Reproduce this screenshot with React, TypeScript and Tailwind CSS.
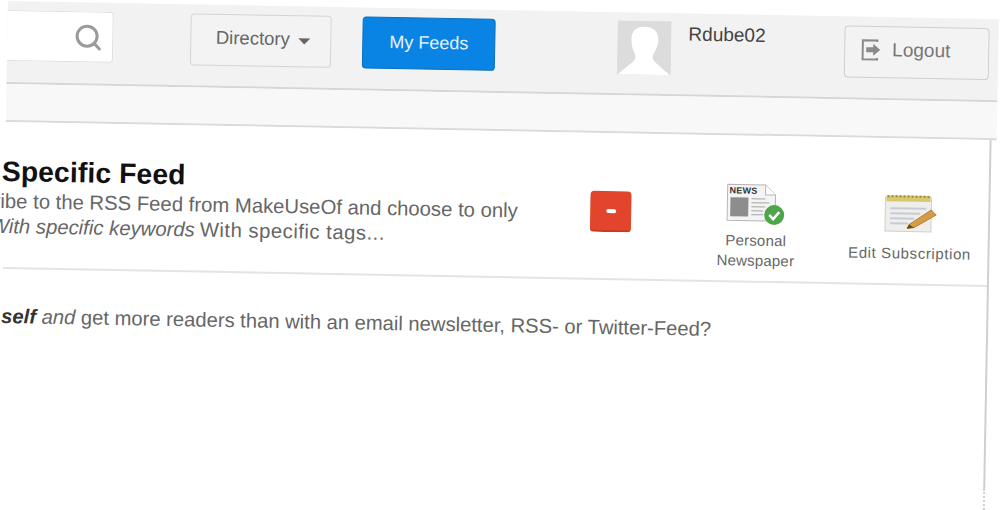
import { Search } from "lucide-react";

function LogoutIcon() {
  return (
    <svg width="22" height="24" viewBox="0 0 22 24" fill="none">
      <path d="M17 4V2.5H2.5v19H17V20" stroke="#8a8a8a" strokeWidth="2" />
      <path d="M6 9.5h7V6l7 6-7 6v-3.5H6z" fill="#8a8a8a" />
    </svg>
  );
}

function Avatar() {
  return (
    <svg width="54" height="54" viewBox="0 0 54 54" className="shrink-0">
      <rect width="54" height="54" fill="#dcdcdc" />
      <path
        d="M27 6c-8 0-13 4-13 13 0 6 2 11 4 15 1 3 0 6-3 8L1 54h52L39 42c-3-2-4-5-3-8 2-4 5-9 5-15 0-9-6-13-14-13z"
        fill="#fff"
      />
    </svg>
  );
}

function NewspaperIcon() {
  return (
    <svg width="60" height="44" viewBox="0 0 60 44">
      <path d="M1 2h38l10 10v26H1z" fill="#f4f4f4" stroke="#b5b5b5" />
      <path d="M39 2v10h10" fill="#fff" stroke="#b5b5b5" />
      <text x="3" y="11" fontSize="9" fontWeight="700" fill="#333" fontFamily="Liberation Sans, sans-serif">
        NEWS
      </text>
      <rect x="4" y="15" width="18" height="19" fill="#8d8d8d" />
      <path d="M25 16h14M25 20h18M25 24h14M25 28h12M25 32h12" stroke="#a5a5a5" />
      <circle cx="48" cy="32" r="10" fill="#4da64a" />
      <path d="M43 32l4 4 6-7" fill="none" stroke="#fff" strokeWidth="2.5" />
    </svg>
  );
}

function NotepadIcon() {
  return (
    <svg width="54" height="40" viewBox="0 0 54 40">
      <rect x="2" y="4" width="46" height="34" fill="#eeeeea" stroke="#cfcfcf" />
      <rect x="3" y="2" width="44" height="6" fill="#d8c872" />
      <path d="M4 3h42" stroke="#9c8b3c" strokeWidth="2" strokeDasharray="2 2" />
      <path d="M7 15h36M7 20h30M7 25h24M7 30h18" stroke="#c6cbd6" strokeWidth="2" />
      <path d="M26 31l22-15 5 5-22 13-7 1z" fill="#d69c45" stroke="#a87428" strokeWidth="0.8" />
      <path d="M24 35l2-4 5 3z" fill="#5b4a32" />
    </svg>
  );
}

export default function App() {
  return (
    <div className="h-[510px] w-[1000px] overflow-hidden bg-white font-['Liberation_Sans',Arial,sans-serif]">
      <div className="ml-[8px] w-[991px] origin-top-left rotate-[1.05deg] pt-[1px]">
        {/* top bar */}
        <div className="flex h-[83px] items-center border-b-2 border-[#d6d6d6] bg-[#f2f2f2] pb-[16px] pt-[4px]">
          <div className="flex h-[51px] w-[106px] items-center justify-end rounded-r border border-l-0 border-[#dedede] bg-white pr-[9px]">
            <Search size={30} strokeWidth={2.4} className="text-[#9a9a9a]" />
          </div>
          <button className="ml-[77px] flex h-[52px] w-[141px] items-center justify-center gap-[8px] rounded-sm border border-[#d4d4d4] bg-[#f3f3f3] pb-[3px] pl-[4px] text-[18.5px] text-[#666]">
            Directory
            <span className="mt-[4px] h-0 w-0 border-x-[6px] border-t-[6px] border-x-transparent border-t-[#666]" />
          </button>
          <button className="ml-[31px] h-[52px] w-[133px] rounded-sm border border-[#0b6fbd] bg-[#0a84e4] text-[18px] text-[#e4f3ff]">
            My Feeds
          </button>
          <div className="ml-[122px] flex items-start">
            <Avatar />
            <span className="ml-[17px] mt-[2px] text-[19px] leading-[22px] text-[#444]">Rdube02</span>
          </div>
          <button className="ml-auto mr-[9px] flex h-[52px] w-[145px] items-center gap-[10px] rounded-sm border border-[#cfcfcf] bg-[#f3f3f3] pb-[3px] pl-[15px] text-[19px] text-[#777]">
            <LogoutIcon />
            Logout
          </button>
        </div>

        {/* strip under the bar */}
        <div className="h-[38px] border-b-2 border-[#dadada] bg-[#f8f8f8]" />

        {/* feed card */}
        <div className="relative h-[349px] w-[986px] border-r-2 border-[#cfcfcf] bg-white">
          <div className="flex h-[147px] items-start border-b-2 border-[#e4e4e4]">
            <div className="w-[586px]">
              <h2 className="-ml-[3px] mt-[33px] text-[28.3px] font-bold leading-[32px] tracking-[0.1px] text-[#111]">
                Specific Feed
              </h2>
              <div className="mt-[2px] whitespace-nowrap text-[20.3px] leading-[25px] text-[#666]">
                <p className="-ml-[67px]">Subscribe to the RSS Feed from MakeUseOf and choose to only</p>
                <p className="-ml-[14px]">
                  <em>With specific keywords</em>
                  <span className="ml-[5px] tracking-[0.5px]">With specific tags...</span>
                </p>
              </div>
            </div>
            <button className="mt-[58px] flex h-[41px] w-[41px] items-center justify-center rounded-sm border-b-2 border-[#c93a22] bg-[#e2452b]">
              <span className="h-[4px] w-[10px] rounded-sm bg-white" />
            </button>
            <div className="ml-[75px] mt-[47px] flex w-[100px] flex-col items-center text-center text-[15px] leading-[20px] tracking-[0.2px] text-[#666]">
              <NewspaperIcon />
              <span className="mt-[4px]">Personal</span>
              <span>Newspaper</span>
            </div>
            <div className="ml-[39px] mt-[55px] flex w-[130px] flex-col items-center text-[15px] leading-[20px] tracking-[0.6px] text-[#666]">
              <NotepadIcon />
              <span className="mt-[10px] whitespace-nowrap">Edit Subscription</span>
            </div>
          </div>
          <p className="-ml-[1px] mt-[35px] whitespace-nowrap text-[20.2px] leading-[24px] text-[#666]">
            <b className="italic text-[#333]">self</b> <em>and</em> get more readers than with an email newsletter, RSS- or Twitter-Feed?
          </p>
        </div>
        <div className="h-[40px] w-[986px] border-r-2 border-dotted border-[#cfcfcf]" />
      </div>
    </div>
  );
}
